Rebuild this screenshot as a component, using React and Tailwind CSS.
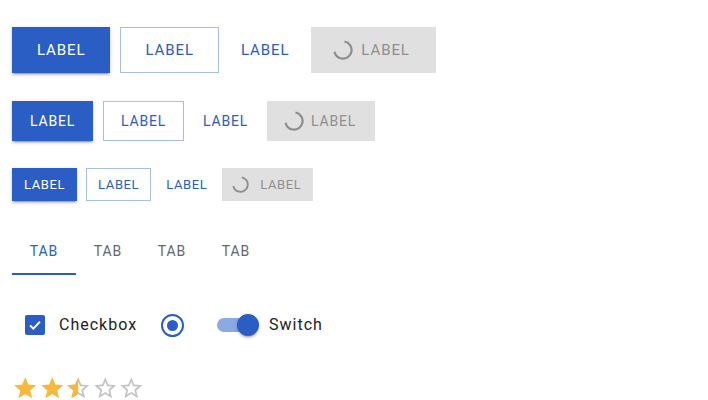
import React from 'react';

const BLUE = 'text-[#2a5ec4]';
const RAISED = 'shadow-[0_3px_1px_-2px_rgba(0,0,0,0.2),0_2px_2px_0_rgba(0,0,0,0.14),0_1px_5px_0_rgba(0,0,0,0.12)]';

const STAR = 'M12 17.27L18.18 21l-1.64-7.03L22 9.24l-7.19-.61L12 2 9.19 8.63 2 9.24l5.46 4.73L5.82 21z';
const STAR_OUTLINE =
    'M22 9.24l-7.19-.62L12 2 9.19 8.63 2 9.24l5.46 4.73L5.82 21 12 17.27 18.18 21l-1.63-7.03L22 9.24zM12 15.4l-3.76 2.27 1-4.28-3.32-2.88 4.38-.38L12 6.1l1.71 4.04 4.38.38-3.32 2.88 1 4.28L12 15.4z';

const sizes = {
    lg: { h: 'h-[46px]', text: 'text-[15px] tracking-[0.9px]', contained: 'px-[25px]', outlined: 'px-[24px]', plain: 'px-[12px]', disabled: 'pl-[22px] pr-[26px] gap-[8px]', spin: 20, gap: 'gap-[10px]' },
    md: { h: 'h-[40px]', text: 'text-[14px] tracking-[0.8px]', contained: 'px-[18px]', outlined: 'px-[17px]', plain: 'px-[9px]', disabled: 'pl-[17px] pr-[19px] gap-[7px]', spin: 20, gap: 'gap-[10px]' },
    sm: { h: 'h-[33px]', text: 'text-[13px] tracking-[0.6px]', contained: 'px-[12px]', outlined: 'px-[11px]', plain: 'px-[6px]', disabled: 'pl-[10px] pr-[12px] gap-[11px]', spin: 17, gap: 'gap-[9px]' },
};

function Spinner({ size }) {
    return (
        <svg width={size} height={size} viewBox="0 0 20 20" className="shrink-0">
            <circle
                cx="10"
                cy="10"
                r="8.6"
                fill="none"
                stroke="#8d8d8d"
                strokeWidth="2.2"
                strokeDasharray="37 60"
                transform="rotate(-80 10 10)"
            />
        </svg>
    );
}

function ButtonRow({ size, className }) {
    const s = sizes[size];
    const base = `flex items-center justify-center ${s.h} ${s.text} font-normal uppercase`;
    return (
        <div className={`flex items-center ${s.gap} ${className}`}>
            <button className={`${base} ${s.contained} bg-[#2a5ec4] text-white ${RAISED}`}>Label</button>
            <button className={`${base} ${s.outlined} border border-[#a3bfea] bg-white ${BLUE}`}>Label</button>
            <button className={`${base} ${s.plain} ${BLUE}`}>Label</button>
            <button className={`${base} ${s.disabled} bg-[#e0e0e0] text-[#8f8f8f]`}>
                <Spinner size={s.spin} />
                Label
            </button>
        </div>
    );
}

function Tabs() {
    return (
        <div className="flex mt-[26px] h-[48px]">
            {[0, 1, 2, 3].map((i) => (
                <div
                    key={i}
                    className={`relative w-[64px] flex items-center justify-center text-[14px] font-normal tracking-[0.9px] ${
                        i === 0 ? BLUE : 'text-[#666666]'
                    }`}
                >
                    TAB
                    {i === 0 && <span className="absolute left-0 right-0 bottom-0 h-[2px] bg-[#2a5ec4]" />}
                </div>
            ))}
        </div>
    );
}

function Star({ kind }) {
    return (
        <svg width="26.5" height="26.5" viewBox="0 0 24 24" className="shrink-0">
            {kind === 'full' && <path d={STAR} fill="#f6b93b" />}
            {kind === 'empty' && <path d={STAR_OUTLINE} fill="#c4c4c4" />}
            {kind === 'half' && (
                <>
                    <defs>
                        <clipPath id="leftHalf">
                            <rect x="0" y="0" width="12" height="24" />
                        </clipPath>
                    </defs>
                    <path d={STAR_OUTLINE} fill="#c4c4c4" />
                    <path d={STAR} fill="#f6b93b" clipPath="url(#leftHalf)" />
                </>
            )}
        </svg>
    );
}

export default function App() {
    return (
        <div className="w-[708px] h-[400px] overflow-hidden bg-white pl-3 pt-[27px] font-['Roboto',sans-serif]">
            <ButtonRow size="lg" />
            <ButtonRow size="md" className="mt-[28px]" />
            <ButtonRow size="sm" className="mt-[27px]" />

            <Tabs />

            {/* checkbox / radio / switch */}
            <div className="flex items-center h-[42px] mt-[29px] text-[16px] text-[#222222]">
                <div className="ml-[13px] w-[20px] h-[20px] rounded-[2px] bg-[#2a5ec4] flex items-center justify-center">
                    <svg width="16" height="16" viewBox="0 0 24 24">
                        <path d="M4.5 12.5l5 5L19.5 7" fill="none" stroke="white" strokeWidth="3" />
                    </svg>
                </div>
                <span className="ml-[14px] tracking-[1px]">Checkbox</span>
                <div className="ml-[24px] w-[23px] h-[23px] rounded-full border-2 border-[#2a5ec4] flex items-center justify-center">
                    <div className="w-[11px] h-[11px] rounded-full bg-[#2a5ec4]" />
                </div>
                <div className="relative ml-[33px] w-[42px] h-[22px]">
                    <div className="absolute left-0 top-[4px] w-[36px] h-[14px] rounded-full bg-[#8aaae2]" />
                    <div className={`absolute right-0 top-0 w-[22px] h-[22px] rounded-full bg-[#2a5ec4] ${RAISED}`} />
                </div>
                <span className="ml-[10px] tracking-[1px]">Switch</span>
            </div>

            <div className="flex mt-[29px]">
                <Star kind="full" />
                <Star kind="full" />
                <Star kind="half" />
                <Star kind="empty" />
                <Star kind="empty" />
            </div>
        </div>
    );
}
